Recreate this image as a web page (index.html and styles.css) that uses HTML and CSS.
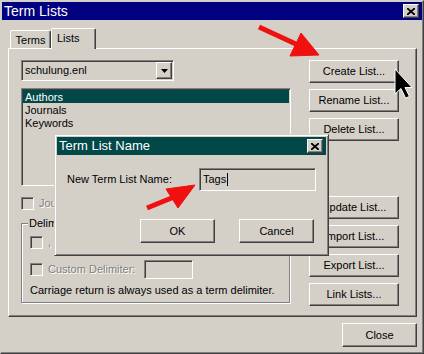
FILE: index.html
```html
<!DOCTYPE html>
<html lang="en">
<head>
  <meta charset="UTF-8" />
  <title>Term Lists</title>
  <link rel="stylesheet" href="styles.css">
</head>
<body>
  <div class="window">
    <div class="titlebar">
      <span class="title">Term Lists</span>
      <span class="title-btn">
        <svg width="8" height="7" viewBox="0 0 8 7"><path d="M0 0L8 7M8 0L0 7" stroke="#000" stroke-width="1.8"/></svg>
      </span>
    </div>

    <div class="window-body">
      <div class="tabs">
        <div class="tab">Terms</div>
        <div class="tab active">Lists</div>
      </div>

      <div class="panel">
        <div class="left-col">
          <div class="combo sunken">
            <span class="combo-text">schulung.enl</span>
            <span class="combo-btn raised">
              <svg width="7" height="4" viewBox="0 0 7 4"><path d="M0 0H7L3.5 4Z" fill="#000"/></svg>
            </span>
          </div>

          <div class="listbox sunken">
            <div class="item selected">Authors</div>
            <div class="item">Journals</div>
            <div class="item">Keywords</div>
          </div>

          <div class="check-row first">
            <span class="checkbox sunken"></span>
            <span class="disabled">Journal Term List</span>
          </div>

          <div class="group">
            <div class="group-label">Delimiters</div>
            <div class="check-row">
              <span class="checkbox sunken"></span>
              <span class="disabled">, Comma</span>
            </div>
            <div class="check-row delim-row">
              <span class="checkbox sunken"></span>
              <span class="disabled delim-label">Custom Delimiter:</span>
              <span class="delim-field sunken"></span>
            </div>
            <div class="note">Carriage return is always used as a term delimiter.</div>
          </div>
        </div>

        <div class="right-col">
          <div class="btn">Create List...</div>
          <div class="btn">Rename List...</div>
          <div class="btn">Delete List...</div>
          <div class="btn spaced">Update List...</div>
          <div class="btn">Import List...</div>
          <div class="btn">Export List...</div>
          <div class="btn">Link Lists...</div>
        </div>
      </div>

      <div class="footer">
        <div class="btn close-btn">Close</div>
      </div>
    </div>

    <div class="dialog">
      <div class="titlebar dialog-title">
        <span class="title">Term List Name</span>
        <span class="title-btn">
          <svg width="8" height="7" viewBox="0 0 8 7"><path d="M0 0L8 7M8 0L0 7" stroke="#000" stroke-width="1.8"/></svg>
        </span>
      </div>
      <div class="dialog-body">
        <div class="name-row">
          <span>New Term List Name:</span>
          <span class="name-field sunken">Tags<span class="caret"></span></span>
        </div>
        <div class="dialog-buttons">
          <div class="btn dlg-btn">OK</div>
          <div class="btn dlg-btn">Cancel</div>
        </div>
      </div>
    </div>

    <svg class="overlay" width="424" height="354" viewBox="0 0 424 354">
      <g fill="#f01010" stroke="#f01010">
        <line x1="258" y1="26" x2="297" y2="44" stroke-width="5"/>
        <polygon points="318,54 300,32 289,55" stroke-width="1"/>
        <line x1="146" y1="207" x2="173" y2="196" stroke-width="5"/>
        <polygon points="194,184 165,188 177,207" stroke-width="1"/>
      </g>
      <polygon points="394,68 394,93 400,87.5 404.5,97 408.5,95.5 404,86.5 411,86.5" fill="#000" stroke="#fff" stroke-width="1"/>
    </svg>
  </div>
</body>
</html>
```

FILE: styles.css
```css
* {
  box-sizing: border-box;
}

body {
  margin: 0;
  font-family: 'Liberation Sans', Arial, sans-serif;
  font-size: 11px;
  line-height: 13px;
  color: #000;
  background: #d4d0c8;
}

.window {
  position: relative;
  width: 424px;
  height: 354px;
  padding: 1px;
  border: 1px solid;
  border-color: #d4d0c8 #404040 #404040 #d4d0c8;
  box-shadow: inset -1px -1px #808080;
  background: #d4d0c8;
  overflow: hidden;
}

.raised {
  border: 1px solid;
  border-color: #fff #404040 #404040 #fff;
  box-shadow: inset -1px -1px #808080;
  background: #d4d0c8;
}

.sunken {
  border: 1px solid;
  border-color: #808080 #fff #fff #808080;
  box-shadow: inset 1px 1px #404040, inset -1px -1px #d4d0c8;
  background: #d4d0c8;
}

/* title bars */
.titlebar {
  height: 18px;
  display: flex;
  align-items: center;
  justify-content: space-between;
  padding: 0 3px 0 2px;
  background: #000080;
  color: #fff;
  font-size: 14px;
  line-height: 18px;
}

.title-btn {
  width: 16px;
  height: 14px;
  display: flex;
  align-items: center;
  justify-content: center;
  border: 1px solid;
  border-color: #fff #404040 #404040 #fff;
  box-shadow: inset -1px -1px #808080;
  background: #d4d0c8;
}

.title-btn svg {
  display: block;
}

/* tabs */
.window-body {
  padding: 8px 5px 0 6px;
}

.tabs {
  display: flex;
  align-items: flex-end;
  height: 20px;
  padding-left: 2px;
}

.tab {
  width: 41px;
  height: 18px;
  padding-top: 3px;
  text-align: center;
  border: 1px solid;
  border-bottom: 0;
  border-color: #fff #404040 transparent #fff;
  box-shadow: inset -1px 0 #808080;
  border-radius: 2px 2px 0 0;
  background: #d4d0c8;
}

.tab.active {
  position: relative;
  z-index: 1;
  width: 45px;
  height: 21px;
  margin-bottom: -1px;
  padding-left: 5px;
  text-align: left;
}

/* panel */
.panel {
  display: flex;
  gap: 18px;
  height: 269px;
  padding: 11px 0 0 12px;
  border: 1px solid;
  border-color: #fff #404040 #404040 #fff;
  box-shadow: inset -1px -1px #808080;
}

.left-col {
  width: 270px;
}

.combo {
  width: 153px;
  height: 21px;
  padding: 1px;
  display: flex;
  align-items: center;
  justify-content: space-between;
}

.combo-text {
  padding-left: 2px;
}

.combo-btn {
  width: 16px;
  height: 17px;
  display: flex;
  align-items: center;
  justify-content: center;
}

.combo-btn svg {
  display: block;
}

.listbox {
  height: 98px;
  margin-top: 7px;
  padding: 1px;
}

.item {
  height: 13px;
  padding: 2px 0 0 2px;
  line-height: 11px;
}

.item.selected {
  background: #034848;
  color: #fff;
}

.check-row {
  display: flex;
  align-items: center;
  gap: 5px;
  margin-top: 6px;
  white-space: nowrap;
}

.check-row.first {
  margin-top: 11px;
}

.checkbox {
  width: 13px;
  height: 13px;
  flex: none;
}

.disabled {
  color: #808080;
  text-shadow: 1px 1px #fff;
}

.group {
  width: 269px;
  height: 80px;
  margin-top: 13px;
  padding: 0 8px;
  border: 1px solid #808080;
  box-shadow: 1px 1px 0 #fff, inset 1px 1px #fff;
}

.group-label {
  width: max-content;
  margin: -7px 0 0 -2px;
  padding: 0 1px;
  background: #d4d0c8;
}

.delim-row {
  margin-top: 11px;
  height: 19px;
}

.delim-label {
  width: 96px;
}

.delim-field {
  width: 49px;
  height: 19px;
  margin-left: -5px;
}

.note {
  margin-top: 5px;
  white-space: nowrap;
}

/* buttons */
.right-col {
  width: 90px;
  display: flex;
  flex-direction: column;
  gap: 6px;
}

.btn {
  height: 23px;
  display: flex;
  align-items: center;
  justify-content: center;
  border: 1px solid;
  border-color: #fff #404040 #404040 #fff;
  box-shadow: inset -1px -1px #808080;
  background: #d4d0c8;
  white-space: nowrap;
}

.btn.spaced {
  margin-top: 49px;
}

.footer {
  display: flex;
  justify-content: flex-end;
  margin-top: 6px;
}

.close-btn {
  width: 75px;
  height: 24px;
}

/* modal dialog */
.dialog {
  position: absolute;
  left: 53px;
  top: 133px;
  z-index: 2;
  width: 275px;
  height: 122px;
  padding: 2px;
  border: 1px solid;
  border-color: #d4d0c8 #404040 #404040 #d4d0c8;
  box-shadow: inset 1px 1px #fff, inset -1px -1px #808080;
  background: #d4d0c8;
}

.dialog-title {
  background: #034848;
  font-size: 13px;
}

.dialog-body {
  padding: 13px 12px 0 10px;
}

.name-row {
  display: flex;
  align-items: center;
  justify-content: space-between;
  padding-right: 0;
  margin-right: -2px;
}

.name-field {
  width: 117px;
  height: 23px;
  display: flex;
  align-items: center;
  padding-left: 3px;
}

.caret {
  display: inline-block;
  width: 1px;
  height: 13px;
  margin-left: 1px;
  background: #000;
}

.dialog-buttons {
  display: flex;
  justify-content: flex-end;
  gap: 24px;
  margin-top: 28px;
}

.dlg-btn {
  width: 75px;
  height: 24px;
}

.overlay {
  position: absolute;
  left: 0;
  top: 0;
  z-index: 3;
  pointer-events: none;
}
```
